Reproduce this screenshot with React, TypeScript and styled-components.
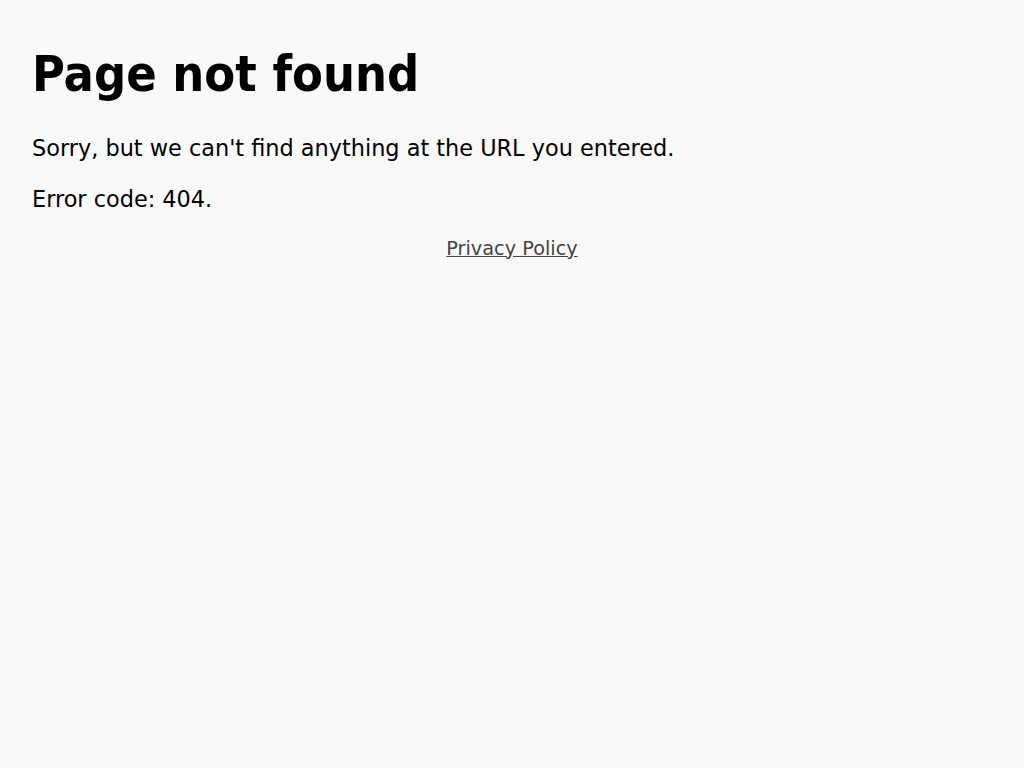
import React from "react";
import styled, { createGlobalStyle } from "styled-components";

const Global = createGlobalStyle`
  html, body { margin: 0; padding: 0; background: #f9f9f9; }
  body { font-family: "DejaVu Sans", sans-serif; color: #000; }
`;

const Main = styled.main`
  padding: 32px 32px 0;
`;

const Title = styled.h1`
  font-family: "DejaVu Sans Condensed", "DejaVu Sans", sans-serif;
  font-stretch: condensed;
  font-size: 50px;
  font-weight: 700;
  margin: 14px 0 30px;
  line-height: 1.15;
`;

const Text = styled.p`
  font-size: 22.4px;
  margin: 0 0 22px;
  line-height: 29px;
`;

const Footer = styled.footer`
  text-align: center;
  font-size: 19.3px;
  line-height: 25px;
  margin-top: 1.5px;
`;

const Link = styled.a`
  color: #444;
  text-decoration: underline;
`;

export default function App() {
  return (
    <>
      <Global />
      <Main>
        <Title>Page not found</Title>
        <Text>Sorry, but we can't find anything at the URL you entered.</Text>
        <Text>Error code: 404.</Text>
        <Footer>
          <Link href="#">Privacy Policy</Link>
        </Footer>
      </Main>
    </>
  );
}
